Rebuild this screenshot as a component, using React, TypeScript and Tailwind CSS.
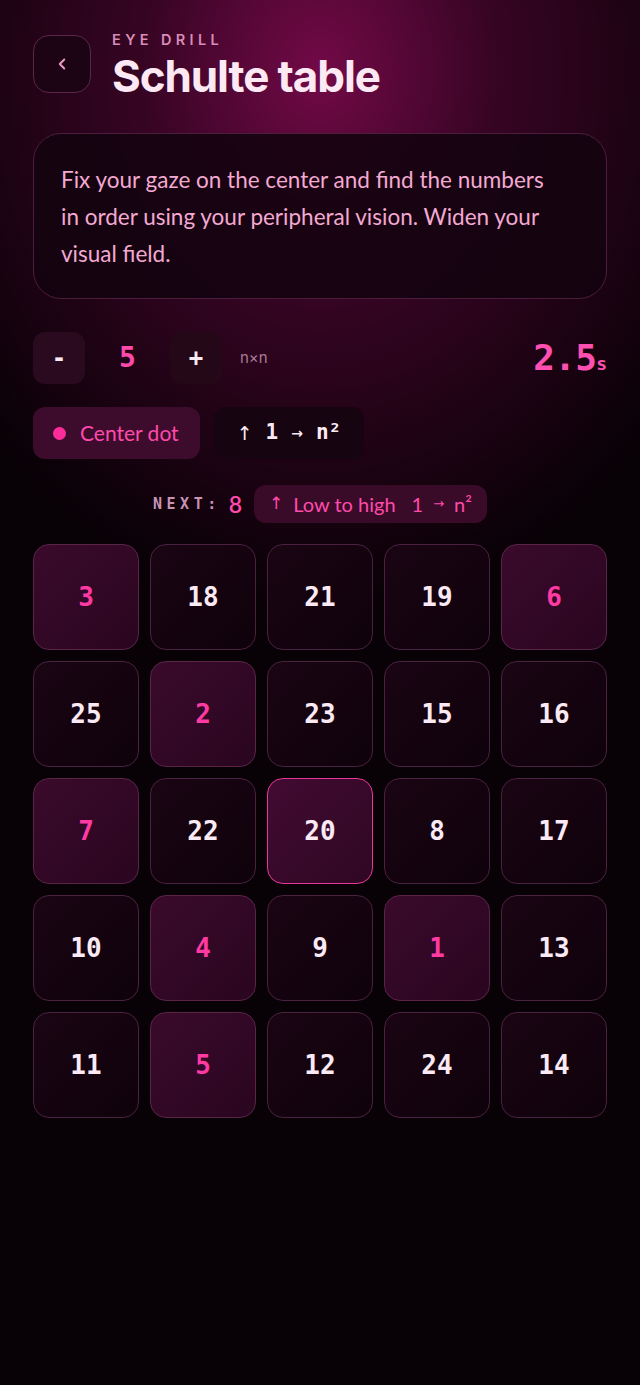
import React from 'react';
import { ChevronLeft } from 'lucide-react';

const grid: number[] = [3, 18, 21, 19, 6, 25, 2, 23, 15, 16, 7, 22, 20, 8, 17, 10, 4, 9, 1, 13, 11, 5, 12, 24, 14];
const found = 7;
const center = 20;

const mono = { fontFamily: '"DejaVu Sans Mono", "Liberation Mono", monospace' };

const Cell: React.FC<{ n: number }> = ({ n }) => {
  const done = n <= found;
  const isCenter = n === center;
  let cls = 'border-[#4a2140] bg-gradient-to-br from-[#1a0513] to-[#0f020b] text-[#fbeaf4]';
  if (done) cls = 'border-[#5a2449] bg-gradient-to-br from-[#3a0a2b] to-[#2a0620] text-[#ff3aa3]';
  if (isCenter) cls = 'border-[#e8369a] bg-gradient-to-br from-[#420b31] to-[#2f0723] text-[#fbeaf4]';
  return (
    <div className={`h-[106px] rounded-2xl border flex items-center justify-center text-[26px] font-bold ${cls}`}>
      <span style={mono}>{n}</span>
    </div>
  );
};

export default function App() {
  return (
    <div
      className="min-h-[1385px] w-full bg-[#080106] font-['Inter','Noto_Sans',sans-serif] text-white"
      style={{
        backgroundImage:
          'radial-gradient(ellipse 440px 540px at 50% 70px, rgba(120,10,75,0.95) 0%, rgba(75,6,48,0.7) 40%, rgba(8,1,6,0) 100%)',
      }}
    >
      <div className="px-[33px] pt-[35px]">
        <div className="flex items-start gap-[21px]">
          <button className="w-[58px] h-[58px] rounded-2xl border border-[#5a2748] bg-[#1c0414] flex items-center justify-center">
            <ChevronLeft size={18} strokeWidth={2.5} className="text-[#f29bc9]" />
          </button>
          <div className="-mt-[5px]">
            <div className="text-[14.5px] font-semibold tracking-[0.3em] text-[#d88cb6] leading-5">EYE DRILL</div>
            <h1 className="text-[44px] font-bold tracking-[-0.025em] text-[#fde9f4] leading-[50px] mt-[1px]">Schulte table</h1>
          </div>
        </div>

        <div className="mt-[32px] h-[166px] rounded-[28px] border border-[#4d1d3d] bg-[#140310]/90 px-[27px] pt-[27px]">
          <p className="max-w-[492px] leading-[37px] text-[#f3a9d1] font-['Lato',sans-serif] text-[22.5px]">
            Fix your gaze on the center and find the numbers in order using your peripheral vision. Widen your visual field.
          </p>
        </div>

        <div className="mt-[32px] flex items-center">
          <button className="w-[52px] h-[52px] rounded-xl bg-[#2a0a1f] text-[#fbeaf4] text-[24px] font-bold flex items-center justify-center" style={mono}>
            -
          </button>
          <div className="w-[85px] text-center text-[28px] font-bold text-[#ff4aac]" style={mono}>5</div>
          <button className="w-[52px] h-[52px] rounded-xl bg-[#240818] text-[#fbeaf4] text-[24px] font-bold flex items-center justify-center" style={mono}>
            +
          </button>
          <span className="ml-[18px] text-[15px] text-[#a97c98]">n×n</span>
          <div className="ml-auto flex items-baseline text-[#ff4fb0] font-bold" style={mono}>
            <span className="text-[36px] tracking-[-0.02em]">2.5</span>
            <span className="text-[18px]">s</span>
          </div>
        </div>

        <div className="mt-[22px] flex items-center gap-[14px]">
          <div className="h-[52px] pl-[20px] pr-[21px] rounded-xl bg-[#3d0b2b] flex items-center gap-[14px]">
            <span className="w-[13px] h-[13px] rounded-full bg-[#ff2d9c]" />
            <span className="text-[21px] text-[#ff4aac] font-['Lato',sans-serif]">Center dot</span>
          </div>
          <div className="h-[52px] px-[23px] rounded-xl bg-[#170411] flex items-center gap-[13px] text-[#fbeaf4] font-bold" style={mono}>
            <span className="text-[19px] font-normal font-['DejaVu_Sans',sans-serif]">↑</span>
            <span className="text-[21px]">1</span>
            <span className="text-[14px] font-['DejaVu_Sans',sans-serif]">→</span>
            <span className="text-[21px]">n²</span>
          </div>
        </div>

        <div className="mt-[26px] flex items-center justify-center gap-[12px]">
          <span className="text-[15px] font-semibold tracking-[0.3em] text-[#c992b4]" style={mono}>NEXT:</span>
          <span className="text-[23px] text-[#ff4aac] -ml-[4px] font-['Lato',sans-serif] font-semibold">8</span>
          <div className="h-[38px] px-[15px] rounded-xl bg-[#3a0a29] flex items-center gap-[10px] text-[#ff4aac] font-['Lato',sans-serif]">
            <span className="text-[17px] font-['DejaVu_Sans',sans-serif]">↑</span>
            <span className="text-[20px]">Low to high</span>
            <span className="text-[20px] ml-[6px]">1</span>
            <span className="text-[13px] font-['DejaVu_Sans',sans-serif]">→</span>
            <span className="text-[20px]">n²</span>
          </div>
        </div>

        <div className="mt-[21px] grid grid-cols-5 gap-[11px]">
          {grid.map((n) => (
            <Cell key={n} n={n} />
          ))}
        </div>
      </div>
    </div>
  );
}
